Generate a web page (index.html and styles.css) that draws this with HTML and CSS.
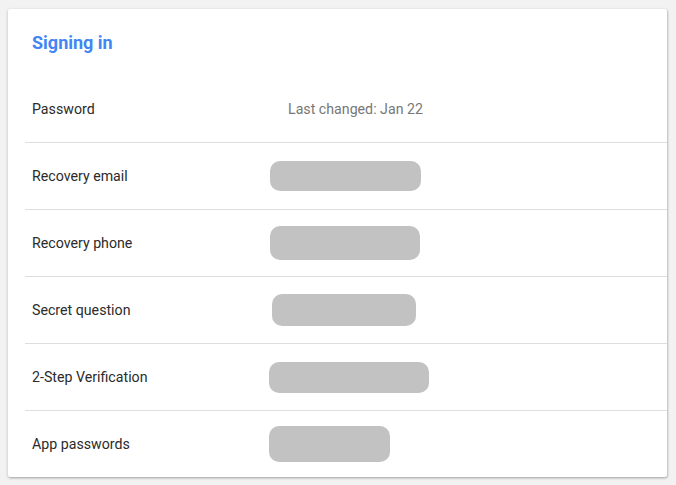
FILE: index.html
```html
<!DOCTYPE html>
<html lang="en">
<head>
    <meta charset="UTF-8">
    <title>Signing in</title>
    <link rel="stylesheet" href="styles.css">
</head>
<body>
    <div class="card">
        <h2 class="card-title">Signing in</h2>
        <div class="rows">
            <div class="row">
                <span class="row-label">Password</span>
                <span class="row-value muted">Last changed: Jan 22</span>
            </div>
            <div class="row">
                <span class="row-label">Recovery email</span>
                <span class="blob" style="width:151px;height:30px"></span>
            </div>
            <div class="row">
                <span class="row-label">Recovery phone</span>
                <span class="blob" style="width:150px;height:34px"></span>
            </div>
            <div class="row">
                <span class="row-label">Secret question</span>
                <span class="blob" style="width:144px;height:32px;margin-left:2px"></span>
            </div>
            <div class="row">
                <span class="row-label">2-Step Verification</span>
                <span class="blob" style="width:160px;height:31px;margin-left:-1px"></span>
            </div>
            <div class="row">
                <span class="row-label">App passwords</span>
                <span class="blob" style="width:121px;height:36px;margin-left:-1px"></span>
            </div>
        </div>
    </div>
</body>
</html>
```

FILE: styles.css
```css
* {
    margin: 0;
    padding: 0;
    box-sizing: border-box;
}

body {
    font-family: Roboto, "Liberation Sans", sans-serif;
    background: #f2f2f2;
    padding: 9px 8px 8px 8px;
    color: #333;
}

.card {
    width: 659px;
    background: #fff;
    border-radius: 2px;
    box-shadow: 0 1px 3px rgba(0, 0, 0, 0.25), 1px 1px 2px rgba(0, 0, 0, 0.12);
}

.card-title {
    font-size: 18px;
    line-height: 20px;
    font-weight: 700;
    color: #4285f4;
    padding: 24px 24px 23px;
}

.row {
    display: flex;
    align-items: center;
    height: 67px;
    margin-left: 17px;
    padding-left: 7px;
    border-top: 1px solid #dedede;
}

.row:first-child {
    height: 66px;
    border-top: none;
}

.row-label {
    width: 238px;
    font-size: 14.2px;
    color: #2b2b2b;
}

.row-value {
    font-size: 14.2px;
}

.muted {
    color: #777;
    margin-left: 18px;
}

.blob {
    display: block;
    background: #c2c2c2;
    border-radius: 10px;
}
```
